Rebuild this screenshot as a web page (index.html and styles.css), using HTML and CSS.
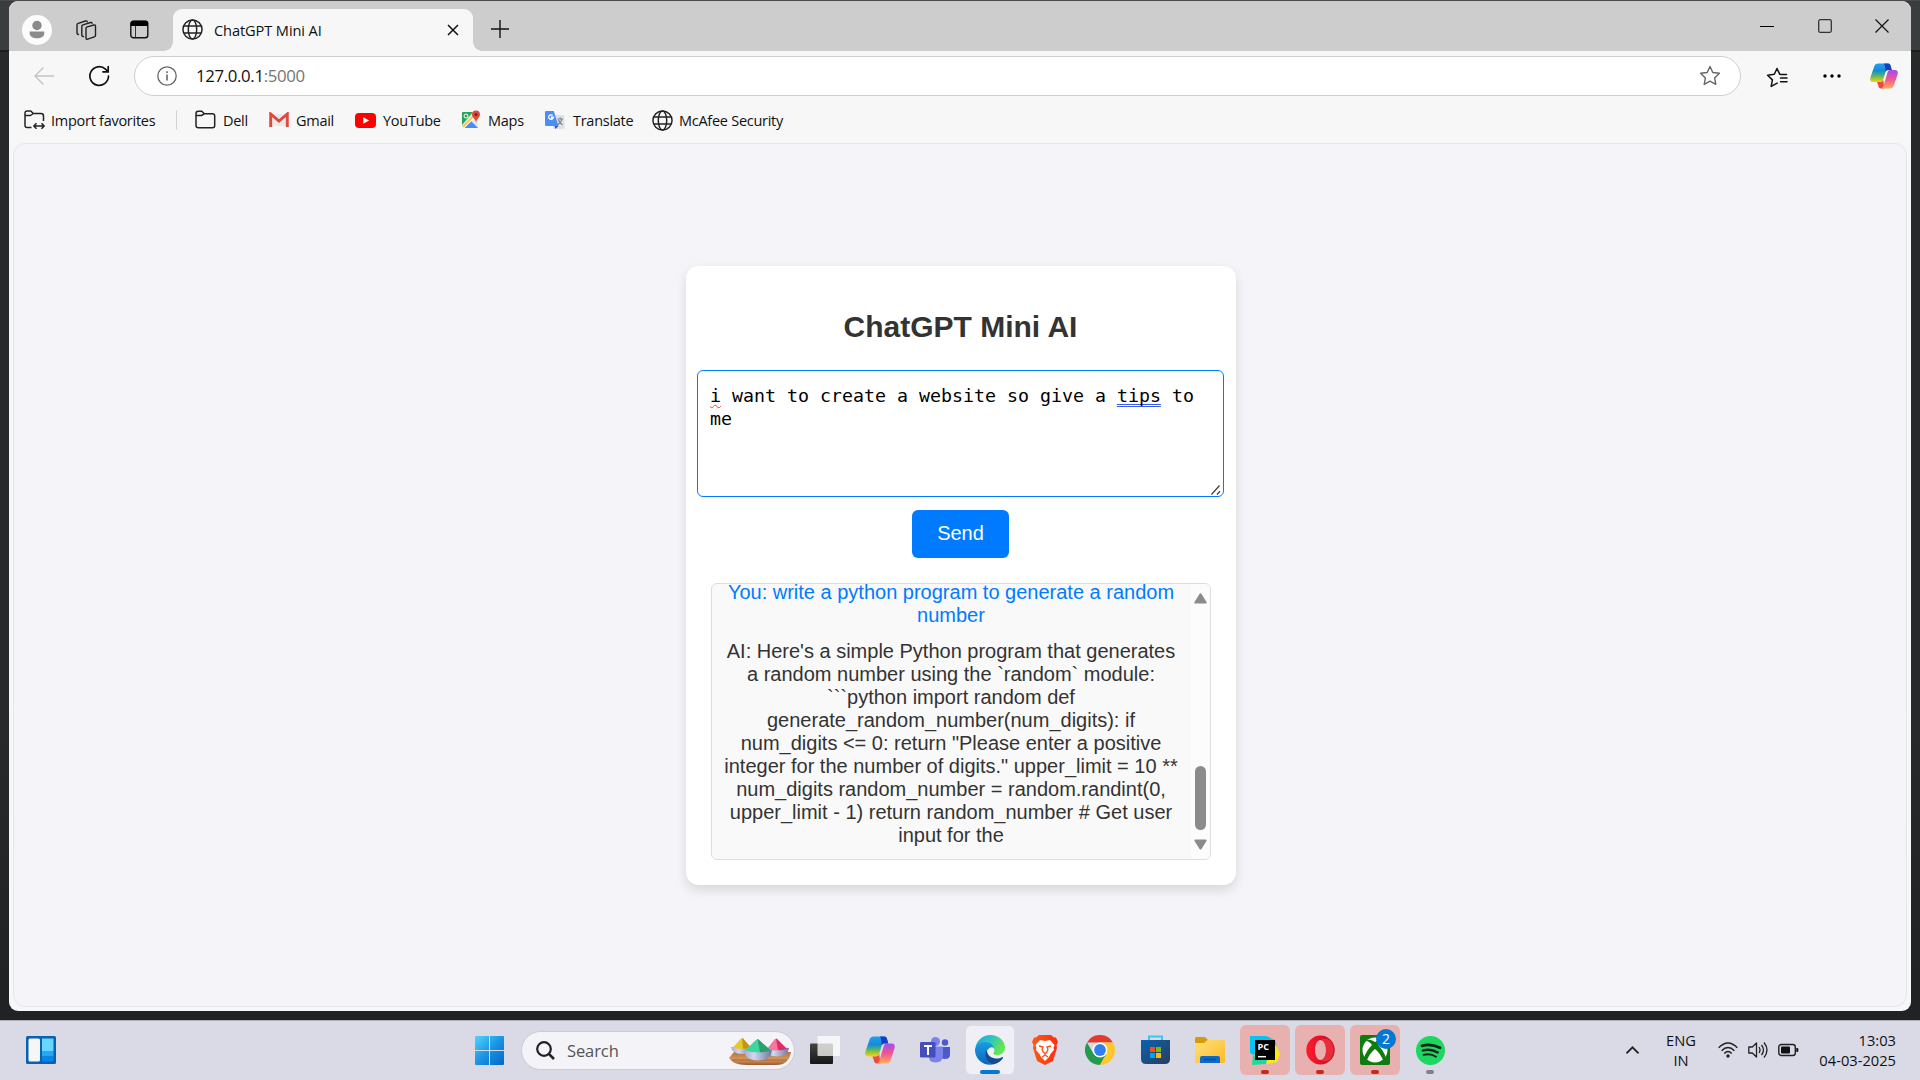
FILE: index.html
```html
<!DOCTYPE html>
<html lang="en">
<head>
<meta charset="utf-8">
<title>ChatGPT Mini AI</title>
<link rel="stylesheet" href="styles.css">
</head>
<body>
<svg width="0" height="0" class="defs">
  <defs>
    <linearGradient id="cpA" x1="0" y1="0" x2="0" y2="1"><stop offset="0" stop-color="#1fa0f0"/><stop offset=".4" stop-color="#168bd8"/><stop offset=".65" stop-color="#52b56a"/><stop offset="1" stop-color="#ffd400"/></linearGradient>
    <linearGradient id="cpB" x1="0" y1="0" x2="0" y2="1"><stop offset="0" stop-color="#a04df2"/><stop offset=".5" stop-color="#f0568f"/><stop offset="1" stop-color="#ffad5c"/></linearGradient>
    <linearGradient id="win" x1="0" y1="0" x2="1" y2="1"><stop offset="0" stop-color="#55d3ff"/><stop offset=".5" stop-color="#1a94e3"/><stop offset="1" stop-color="#0069c4"/></linearGradient>
    <linearGradient id="edgeTop" x1="0" y1="0" x2="1" y2=".4"><stop offset="0" stop-color="#23a5dc"/><stop offset=".5" stop-color="#2dc3c7"/><stop offset="1" stop-color="#66e64f"/></linearGradient>
    <linearGradient id="edgeLeft" x1="0" y1="0" x2="0" y2="1"><stop offset="0" stop-color="#1b9de0"/><stop offset="1" stop-color="#0a65c0"/></linearGradient>
    <linearGradient id="brave" x1="0" x2="1"><stop offset="0" stop-color="#ff5a12"/><stop offset="1" stop-color="#fb2d12"/></linearGradient>
    <linearGradient id="store" x1="0" y1="0" x2="1" y2="1"><stop offset="0" stop-color="#0b63b2"/><stop offset="1" stop-color="#2a3c5c"/></linearGradient>
    <linearGradient id="folder" x1="0" y1="0" x2="1" y2="1"><stop offset="0" stop-color="#ffe07a"/><stop offset="1" stop-color="#fdbb25"/></linearGradient>
    <linearGradient id="opera" x1="0" x2="1"><stop offset="0" stop-color="#ff1b2d"/><stop offset="1" stop-color="#c20a20"/></linearGradient>
    <linearGradient id="bowl" x1="0" x2="1"><stop offset="0" stop-color="#a3aad4"/><stop offset=".35" stop-color="#d3d6ee"/><stop offset="1" stop-color="#6f74a6"/></linearGradient>
    <linearGradient id="wood" x1="0" y1="0" x2="0" y2="1"><stop offset="0" stop-color="#b27443"/><stop offset=".6" stop-color="#d99a5d"/><stop offset="1" stop-color="#9a5a30"/></linearGradient>
    <linearGradient id="tvDark" x1="0" y1="0" x2="0" y2="1"><stop offset="0" stop-color="#44443f"/><stop offset="1" stop-color="#161616"/></linearGradient>
    <symbol id="copilot" viewBox="0 0 28 28">
      <path d="M8.3 1.5H18c1.700 0 2.200 1 2.700 2.800L21.700 8h-3.300c-1.800 0-2.500.8-3 2.500l-2.200 7.200c-.6 1.800-1.400 2.300-3.200 2.300H3.200C.4 20-.2 18 .4 15.600L4 5c.8-2.400 1.900-3.500 4.300-3.500z" fill="url(#cpA)"/>
      <path d="M14 1.500h4c1.700 0 2.200 1 2.700 2.800L21.700 8h-3.300c-1.400 0-2.100.5-2.700 1.600-.2-3-.7-6-1.700-8.100z" fill="#193cc4"/>
      <path d="M7 20h3c1.800 0 2.600-.5 3.200-2.300l1.300 8.800H11c-1.700 0-2.200-1-2.700-2.800z" fill="#ee4b3f"/>
      <path d="M19.700 26.500H10c2 0 3-.9 3.600-3l3.800-12.700c.6-1.800 1-2.800 2.800-2.800h4.600c2.800 0 3.400 2 2.800 4.400L24 23c-.8 2.400-1.900 3.500-4.300 3.500z" fill="url(#cpB)"/>
    </symbol>
    <symbol id="globe" viewBox="0 0 20 20">
      <g fill="none" stroke="#222" stroke-width="1.4"><circle cx="10" cy="10" r="9.100"/><ellipse cx="10" cy="10" rx="4" ry="9.100"/><path d="M1.700 6.600h16.600M1.700 13.400h16.600"/></g>
    </symbol>
  </defs>
</svg>

<div class="window">
  <header class="tabstrip">
    <span class="avatar"><svg width="30" height="30"><circle cx="15" cy="15" r="15" fill="#fcfcfc"/><circle cx="15" cy="10.500" r="4.700" fill="#8b8b8b"/><path d="M7.700 16.500h14.600v1.700c0 3.300-3.200 5-7.300 5s-7.300-1.700-7.300-5z" fill="#8b8b8b"/></svg></span>
    <svg class="workspaces" width="22" height="22" viewBox="0 0 22 22" fill="none" stroke="#222" stroke-width="1.400" stroke-linejoin="round" stroke-linecap="round"><path d="M11.500 8.200 18.800 6q1.700-.4 1.700 1.200v9q0 1.200-1.200 1.600l-6.600 2.400q-1.700.5-1.700-1.200V9.600q0-1 .5-1.400z"/><path d="M8.500 17.500q-1.700.3-1.700-1.400V7.500q0-1.300 1.200-1.700l7.500-2.300q1.300-.3 1.700.7"/><path d="M3.500 15.500Q2 15.500 2 14V6q0-1.200 1.200-1.600L10.500 2q1.300-.4 1.800.8"/></svg>
    <svg class="vtabs" width="19" height="19" viewBox="0 0 19 19"><rect x=".8" y="1.200" width="17" height="16.500" rx="2.500" fill="none" stroke="#111" stroke-width="1.400"/><path d="M.8 6V3.500Q.8.800 3.300.8h12.200q2.500 0 2.500 2.700V6z"/><path d="M5.500 6v11.500" stroke="#333"/></svg>
    <div class="tab">
      <svg width="21" height="21"><use href="#globe"/></svg>
      <span class="tab-title">ChatGPT Mini AI</span>
      <svg width="12" height="12" stroke="#111" stroke-width="1.500"><path d="M1 1l10 10M11 1L1 11"/></svg>
    </div>
    <svg class="newtab" width="18" height="18" stroke="#111" stroke-width="1.400"><path d="M9 0v18M0 9h18"/></svg>
    <div class="controls">
      <svg width="14" height="14" stroke="#000" stroke-width="1.200"><path d="M0 7.500h14"/></svg>
      <svg width="14" height="14" fill="none" stroke="#333" stroke-width="1.300"><rect x=".7" y=".7" width="12.600" height="12.600" rx="1.500"/></svg>
      <svg width="14" height="14" stroke="#111" stroke-width="1.200"><path d="M.5.500l13 13M13.500.500l-13 13"/></svg>
    </div>
  </header>

  <div class="toolbar">
    <svg class="back" width="20" height="18" fill="none" stroke="#c3c3c3" stroke-width="1.400"><path d="M20 9H1M9.500.5L1 9l8.500 8.500"/></svg>
    <svg class="reload" width="22" height="22" fill="none" stroke="#111" stroke-width="1.700" stroke-linecap="round"><path d="M20.500 11a9.300 9.300 0 1 1-3-6.800l2.300 2.300M20.200 1.500v5.300h-5.300"/></svg>
    <div class="address">
      <svg width="20" height="20" fill="none" stroke="#666" stroke-width="1.300"><circle cx="10" cy="10" r="9.200"/><path d="M10 8.500v6M10 5.200v1.700" stroke-width="1.600"/></svg>
      <span class="url">127.0.0.1<i>:5000</i></span>
      <svg width="22" height="21" viewBox="0 0 22 21" fill="none" stroke="#666" stroke-width="1.400" stroke-linejoin="round"><path d="M11 1.500l2.800 6 6.600.8-4.800 4.600 1.200 6.500-5.800-3.200-5.800 3.200 1.200-6.500L1.600 8.300l6.600-.8z"/></svg>
    </div>
    <svg class="favs" width="22" height="21" viewBox="0 0 22 21" fill="none" stroke="#111" stroke-width="1.500" stroke-linejoin="round" stroke-linecap="round"><path d="M15 7.500l-1.200-.2L11 1.500l-2.700 5.700-6.700 1 4.800 4.700-1.200 6.500 6-3.300M14.500 11H21M14.500 14.700H21M15.500 7.500h5"/></svg>
    <svg class="dots" width="18" height="4"><circle cx="2" cy="2" r="1.700"/><circle cx="9" cy="2" r="1.700"/><circle cx="16" cy="2" r="1.700"/></svg>
    <svg class="cp" width="28" height="28"><use href="#copilot"/></svg>
  </div>

  <nav class="bookmarks">
    <a class="bm bm-import"><svg width="21" height="20" viewBox="0 0 21 20" fill="none" stroke="#222" stroke-width="1.500" stroke-linejoin="round"><path d="M7.500 17.500H3.200Q1 17.500 1 15.300V3.200Q1 1 3.200 1h3.600l2.500 2.500h7.500Q19.500 3.500 19.500 6v5M1 5.500h5.500l2.800-2M10 16h10M12.500 13.300L9.800 16l2.700 2.700M17.500 13.300l2.700 2.700-2.700 2.700"/></svg><span>Import favorites</span></a>
    <a class="bm bm-dell"><svg width="21" height="20" viewBox="0 0 21 20" fill="none" stroke="#222" stroke-width="1.500" stroke-linejoin="round"><path d="M1 5.500V3.500Q1 1.300 3.200 1.300h3.600l2.500 2.500h8Q19.700 3.800 19.700 6v9.500q0 2.300-2.200 2.300h-14Q1 17.800 1 15.500V5.500h5.500l2.800-1.700"/></svg><span>Dell</span></a>
    <a class="bm bm-gmail"><svg width="20" height="16" viewBox="0 0 20 16"><path d="M3 2h14v12H3z" fill="#e9e9e9"/><path d="M1.700 15V2l8.300 7 8.300-7v13" fill="none" stroke="#dd4b3e" stroke-width="2.900"/></svg><span>Gmail</span></a>
    <a class="bm bm-youtube"><svg width="21" height="15"><rect width="21" height="15" rx="4" fill="#f00"/><path d="M8.300 4.200v6.600l5.800-3.300z" fill="#fff"/></svg><span>YouTube</span></a>
    <a class="bm bm-maps"><svg width="20" height="20" viewBox="0 0 20 20"><rect x="1" y="2" width="16" height="16" rx="1" fill="#e3e7e9"/><path d="M1 3q0-1 1-1h10L1 15z" fill="#27a35b"/><path d="M3 18l7-7 7 7z" fill="#4b8df8"/><path d="M0 17L14 3l3 2L3 18.500z" fill="#fff" opacity=".85"/><path d="M1 16L13 4v3L2.500 17.700z" fill="#f1cf4a"/><path d="M5 18l5-5.500 6 5.500z" fill="#4b8df8"/><circle cx="5" cy="6" r="2" fill="none" stroke="#fff"/><path d="M15 13c0-4-4-5-4-8.500a4 4 0 0 1 8 0C19 8 15 9 15 13z" fill="#e04a3d"/><circle cx="15" cy="4.500" r="1.500" fill="#7c2019"/></svg><span>Maps</span></a>
    <a class="bm bm-translate"><svg width="20" height="20" viewBox="0 0 20 20"><rect x="8" y="5" width="11.500" height="14" rx="1" fill="#dfe1e3"/><path d="M1.300 1h7.500l4.700 15H1.300Q0 16 0 14.700V2.300Q0 1 1.300 1z" fill="#4c8df6"/><path d="M9.500 16h4l-3 3z" fill="#2b55c5"/><path d="M9.200 7H6.400v1.200H8A2.300 2.300 0 1 1 7.600 5.500" fill="none" stroke="#fff" stroke-width="1.200"/><path d="M12.500 9h5.500M15.200 7.500V9M17 9q-.7 3.500-4.200 5.800M13.500 10q1 2.800 4 4.800" stroke="#74848c" fill="none" stroke-width="1.200"/></svg><span>Translate</span></a>
    <a class="bm bm-mcafee"><svg width="21" height="21"><use href="#globe"/></svg><span>McAfee Security</span></a>
  </nav>

  <main class="page">
    <section class="card">
      <h2>ChatGPT Mini AI</h2>
      <div class="prompt"><span class="misspelled">i</span> want to create a website so give a <span class="grammar">tips</span> to me<svg class="grip" width="10" height="10" stroke="#444" stroke-width="1.300"><path d="M.5 9.500l8-9M6 9.500l3-3.200"/></svg></div>
      <button class="send">Send</button>
      <div class="output">
        <div class="messages">
          <p class="user">You: write a python program to generate a random number</p>
          <p>AI: Here's a simple Python program that generates<br>a random number using the `random` module:<br>```python import random def<br>generate_random_number(num_digits): if<br>num_digits &lt;= 0: return "Please enter a positive<br>integer for the number of digits." upper_limit = 10 **<br>num_digits random_number = random.randint(0,<br>upper_limit - 1) return random_number # Get user<br>input for the</p>
        </div>
        <div class="scrollbar">
          <svg width="13" height="11"><path d="M5.500 1q1-1.400 2 0l5 8q.5 1.500-1 1.500h-10Q0 10.500.5 9z" fill="#8b8b8b"/></svg>
          <span class="thumb"></span>
          <svg width="13" height="11"><path d="M5.500 10q1 1.400 2 0l5-8Q13 .500 11.500.500h-10Q0 .500.500 2z" fill="#8b8b8b"/></svg>
        </div>
      </div>
    </section>
  </main>
</div>

<footer class="taskbar">
  <svg class="widgets" width="30" height="28"><rect width="30" height="28" rx="1.500" fill="#0861b3"/><rect x="2.500" y="2.500" width="11.500" height="23" rx="1.500" fill="#f6f6f6"/><path d="M16 2.500h11.500V15H16z" fill="#68d7ff"/><path d="M16 15h11.500v5.500H16z" fill="#24a7f7"/><path d="M16 20.500h11.500v5H16z" fill="#0a84e8"/></svg>
  <svg class="start" width="29" height="29"><path fill="url(#win)" d="M1 0h13v14H0V1Q0 0 1 0zM15 0h13q1 0 1 1v13H15zM0 15h14v14H1q-1 0-1-1zM15 15h14v13q0 1-1 1H15z"/></svg>
  <div class="search">
    <svg width="19" height="19" fill="none" stroke="#222" stroke-width="2.200"><circle cx="8" cy="8" r="6.800"/><path d="M12.800 12.800l5.200 5.200" stroke-width="2.600"/></svg>
    <span>Search</span>
    <svg class="holi" width="64" height="30" viewBox="0 0 64 30"><path d="M6 15h57q-2 13-15 13H18Q5 28 1 21z" fill="url(#wood)"/><path d="M4 23h55" stroke="#9c6238"/><path d="M3 10h22q-1 7-11 7T3 10z" fill="url(#bowl)"/><path d="M5 10.500L12.500 2q1.500-1.500 3 0L23 10.500q-9 3-18 0z" fill="#e8c92a"/><path d="M14 1q1 0 1.500 1L23 10.500q-4 1.500-8 1.300z" fill="#bf981b"/><path d="M37 11h24q-1 8.500-12 8.500T37 11z" fill="url(#bowl)"/><path d="M39 12l7.500-9.500q1.500-1.500 3 0L59 12q-10 3-20 0z" fill="#f7779f"/><path d="M48 1.500q1 0 1.500 1L59 12q-4 1.500-9 1z" fill="#dd2c66"/><path d="M16 13h28q-1 10.500-14 10.500T16 13z" fill="url(#bowl)"/><path d="M17 13.500L28 3q1.500-1.500 3 0l12 10.500q-13 4-26 0z" fill="#3dd6a3"/><path d="M29.500 2q1 0 1.500 1l12 10.500q-5 2-11 1.800z" fill="#2d9f68"/></svg>
  </div>
  <div class="apps">
    <span class="app"><svg width="30" height="28"><rect y="7.500" width="23" height="20.500" rx="1" fill="url(#tvDark)"/><rect x="7.500" width="22.500" height="20" rx="1" fill="#fff" opacity=".75"/></svg></span>
    <span class="app"><svg width="30" height="30"><use href="#copilot"/></svg></span>
    <span class="app"><svg width="30" height="28" viewBox="0 0 30 28"><circle cx="15.500" cy="5.500" r="4.500" fill="#7b83eb"/><circle cx="25" cy="6.500" r="3.200" fill="#5059c9"/><path d="M20 11h10v7.500q0 4.500-5 4.500t-5-4.500z" fill="#5059c9"/><path d="M9 10.500h14V19q0 7.500-7.500 7.500T9 19z" fill="#7b83eb"/><rect y="6" width="15.500" height="15.500" rx="1.200" fill="#474dbb"/><path d="M4 10h8M8 10v9" stroke="#fff" stroke-width="2"/></svg></span>
    <span class="app active"><svg width="30" height="30" viewBox="0 0 30 30"><path d="M.5 12C2 5 8 0 15 0c9 0 15 6 15 12.500 0 5-4 7.500-8 7.500-2.500 0-4-1-3.500-2 1-1.500 1-2 .8-3.500C19 11 15 8 10 8 6 8 2.500 9.500.5 12z" fill="url(#edgeTop)"/><path d="M0 15c0-5 4.500-8 9.500-8 6 0 9.500 3.500 9.800 7-1-2-3.200-2-4.800-1-3 2-4 5-3.500 8 .8 5 4 8 6.500 8.700C8 31 0 24 0 15z" fill="url(#edgeLeft)"/><path d="M11.500 15C9 20 11 28 18 29.500c5-1 8-3.500 10-6.500.5-.8-.2-1.300-1-.8-5 2.800-13 .8-14.500-4.200-.4-1.300-.4-2-1-3z" fill="#124d94"/></svg></span>
    <span class="app"><svg width="26" height="30" viewBox="0 0 26 30"><path d="M7 0h12l3 2.500h2L26 7l-1.500 3 .5 3-4 13-8 4-8-4L1 13l.5-3L0 7l2-4.500h2z" fill="url(#brave)"/><path d="M8 5l5 1 5-1 4.500 5-1 3 .5 2-3.500 4-1.500 3-4 4-4-4-1.500-3L4 15l.5-2-1-3z" fill="#fff"/><path d="M7 11l4 1-1 2.500 1.500 3L13 18.500l1.500-1L16 14.500 15 12l4-1M13 18v3M10 22l3-2 3 2" fill="none" stroke="#ff4a15" stroke-width="1.300"/></svg></span>
    <span class="app"><svg width="30" height="30" viewBox="0 0 30 30"><path d="M2 7.500A15 15 0 0 1 28 7.500H15z" fill="#e23b2e"/><path d="M2 7.500A15 15 0 0 0 15 30l6.500-11.200L15 15 8.500 18.700z" fill="#249a4c"/><path d="M28 7.500H15l6.500 11.300L15 30A15 15 0 0 0 28 7.500z" fill="#fdc72d"/><circle cx="15" cy="15" r="7.400" fill="#fff"/><circle cx="15" cy="15" r="5.900" fill="#2f80ed"/></svg></span>
    <span class="app"><svg width="29" height="30" viewBox="0 0 29 30"><path d="M8 6V1.500h13V6" fill="none" stroke="#38c7f5" stroke-width="2"/><path d="M0 5h29v19q0 5-5 5H5q-5 0-5-5z" fill="url(#store)"/><path d="M9 12h5v5H9z" fill="#f25022"/><path d="M15 12h5v5h-5z" fill="#7fba00"/><path d="M9 18h5v5H9z" fill="#00a4ef"/><path d="M15 18h5v5h-5z" fill="#ffb900"/></svg></span>
    <span class="app"><svg width="30" height="26" viewBox="0 0 30 26"><path d="M0 1.500Q0 0 1.500 0H10l3 3-3 5H0z" fill="#d99a0b"/><path d="M0 6h9l3.500-3H28.500Q30 3 30 4.500v20q0 1.500-1.500 1.500h-27Q0 26 0 24.500z" fill="url(#folder)"/><path d="M5 26v-5q0-2 2-2h16q2 0 2 2v5z" fill="#0b6bc7"/><path d="M9 22.500h12" stroke="#0a4a94" stroke-width="1.500"/></svg></span>
    <span class="app alert"><svg width="31" height="31" viewBox="0 0 31 31"><path d="M0 1h16l5 2v11L5 21 0 18z" fill="#07c3f2"/><path d="M20 3l5 2 2 7-6 8-4-6z" fill="#21d789"/><path d="M3 20l7-2 16-8 4 9-3 8-10 2-6-2-6 3z" fill="#f7ea1b"/><path d="M2 30l1-10 14 5-1 4z" fill="#21d7a0"/><rect x="5" y="5" width="20" height="20"/><text x="7.500" y="14.500" class="pc">PC</text><path d="M8 21.700h8" stroke="#fff" stroke-width="1.500"/></svg></span>
    <span class="app alert"><svg width="29" height="30" viewBox="0 0 29 30"><path fill-rule="evenodd" d="M14.500.5a14.200 14.500 0 1 0 0 29 14.200 14.500 0 0 0 0-29zm0 4.500c3.300 0 5.500 4.500 5.500 10s-2.200 10-5.500 10S9 20.500 9 15s2.200-10 5.500-10z" fill="url(#opera)"/><path d="M14.500 5c3-1.500 6-1.800 9 0a14 14 0 0 1 0 20c-3 1.800-6 1.500-9 0 3.300 0 5.500-4.500 5.500-10S17.800 5 14.500 5z" fill="#f63d46" opacity=".65"/></svg></span>
    <span class="app alert"><svg width="30" height="30"><rect width="30" height="30" rx="2" fill="#107c10"/><circle cx="15" cy="15" r="12.500" fill="#fff"/><path d="M6 6Q9 3 15 7q6-4 9-1-3 0-6 4 6 6 8 13l-3 2Q20 18 15 14q-5 4-8 11l-3-2q2-7 8-13Q9 6 6 6z" fill="#107c10"/></svg><b class="badge">2</b></span>
    <span class="app running"><svg width="29" height="29" fill="none" stroke="#10251a" stroke-linecap="round"><circle cx="14.500" cy="14.500" r="14.500" fill="#1ed760" stroke="none"/><path d="M6 9.800q9-2.500 18 2" stroke-width="2.800"/><path d="M6.800 14.500q8-2.200 15 2" stroke-width="2.300"/><path d="M7.500 18.800q7-1.800 12.500 1.900" stroke-width="1.900"/></svg></span>
  </div>
  <div class="tray">
    <svg class="chev" width="13" height="8" fill="none" stroke="#222" stroke-width="1.700"><path d="M.5 7.300l6-6 6 6"/></svg>
    <div class="lang">ENG<br>IN</div>
    <svg class="wifi" width="20" height="16" viewBox="0 0 20 16" fill="none" stroke="#222" stroke-width="1.400"><path d="M.7 5.800q9.300-9.500 18.600 0M3.600 8.700q6.400-6.400 12.800 0M6.300 11.400q3.700-3.600 7.400 0"/><circle cx="10" cy="14" r="1.700" fill="#222" stroke="none"/></svg>
    <svg class="vol" width="21" height="18" viewBox="0 0 21 18" fill="none" stroke="#222" stroke-width="1.300" stroke-linejoin="round"><path d="M.8 6h3.500L8.500 2v14L4.300 12H.8z"/><path d="M11 6q2 3 0 6M13.500 4q4 5 0 10M16 1.500q6 7.500 0 15"/></svg>
    <svg class="bat" width="21" height="14" viewBox="0 0 21 14"><rect x=".8" y="1.500" width="16.500" height="11" rx="2.500" fill="none" stroke="#222" stroke-width="1.400"/><rect x="3" y="3.500" width="9" height="7" rx="1" fill="#111"/><path d="M18.300 5h1q1 0 1 1v2q0 1-1 1h-1z" fill="#111"/></svg>
    <div class="clock">13:03<br>04-03-2025</div>
  </div>
</footer>
</body>
</html>
```
FILE: styles.css
```css
* { box-sizing: border-box; }
body {
  margin: 0;
  width: 1920px;
  height: 1080px;
  overflow: hidden;
  display: flex;
  flex-direction: column;
  background: linear-gradient(#4c4b4c 0 1px, #393d3e 1px 50px, #1d1d1e 50px 52px, #28292b 52px 700px, #202224 1000px);
  font-family: "Open Sans", "Noto Sans", sans-serif;
  color: #111;
}
svg { display: block; flex: none; }
.defs { height: 0; }

.window {
  margin: 1px 9px 0;
  height: 1010px;
  flex: none;
  display: flex;
  flex-direction: column;
  background: #f7f7f7;
  border-radius: 9px;
  overflow: hidden;
}

.tabstrip { height: 50px; display: flex; align-items: center; background: #cdcdcd; padding: 0 15px 0 13px; }
.avatar { margin-top: 7px; }
.workspaces { margin-left: 23px; margin-top: 7px; }
.vtabs { margin-left: 33px; margin-top: 7px; }
.tab {
  position: relative;
  align-self: flex-end;
  width: 300px;
  height: 42px;
  margin-left: 24px;
  padding: 0 14px 1px 9px;
  display: flex;
  align-items: center;
  background: #f7f7f7;
  border-radius: 9px 9px 0 0;
}
.tab::before, .tab::after {
  content: "";
  position: absolute;
  bottom: 0;
  width: 9px;
  height: 9px;
}
.tab::before { left: -9px; background: radial-gradient(circle at 0 0, transparent 8.5px, #f7f7f7 9px); }
.tab::after { right: -9px; background: radial-gradient(circle at 100% 0, transparent 8.5px, #f7f7f7 9px); }
.tab-title { flex: 1; margin-left: 11px; font-size: 14.6px; letter-spacing: -.1px; }
.newtab { margin-left: 18px; margin-top: 6px; }
.controls { margin-left: auto; margin-top: -1px; display: flex; gap: 43.500px; padding-right: 7px; }

.toolbar { height: 49px; display: flex; align-items: center; padding-left: 25px; }
.reload { margin-left: 34px; }
.address {
  width: 1607px;
  height: 40px;
  margin-left: 24px;
  padding: 0 19px 0 22px;
  display: flex;
  align-items: center;
  background: #fff;
  border: 1px solid #cecece;
  border-radius: 20px;
}
.url { flex: 1; margin-left: 19px; font-size: 16.800px; letter-spacing: -.35px; }
.url i { font-style: normal; color: #757575; }
.favs { margin-left: 25px; margin-top: 3px; }
.dots { margin-left: 35px; margin-top: 1px; }
.cp { margin-left: 29px; }

.bookmarks { height: 42px; display: flex; align-items: center; padding: 0 0 2px 15px; font-size: 14.500px; }
.bm { display: flex; align-items: center; white-space: nowrap; letter-spacing: -.27px; }
.bm-import { width: 153px; gap: 6px; border-right: 1px solid #d4d4d4; height: 20px; }
.bm-dell { width: 91px; gap: 7px; padding-left: 18px; }
.bm-gmail { width: 87px; gap: 7px; padding-left: 1px; }
.bm-youtube { width: 106px; gap: 7px; }
.bm-maps { width: 84px; gap: 7px; }
.bm-translate { width: 106px; gap: 8px; }
.bm-mcafee { gap: 6px; padding-left: 1px; }

.page {
  flex: 1;
  margin: 1px 4px 4px;
  padding-left: 1px;
  display: flex;
  align-items: center;
  justify-content: center;
  background: #f4f4f9;
  border: 1px solid #e6e6e8;
  border-radius: 12px;
  font-family: "Liberation Sans", Arial, sans-serif;
}
.card {
  width: 550px;
  height: 619px;
  padding: 42px 11px 25px;
  display: flex;
  flex-direction: column;
  align-items: center;
  background: #fff;
  border-radius: 12.500px;
  box-shadow: 0 5px 12px rgba(0, 0, 0, .12);
  font-size: 20px;
  line-height: 23px;
  color: #333;
}
.card h2 { margin: 0 0 24px; font-size: 30px; line-height: 38px; }
.prompt {
  position: relative;
  width: 527px;
  height: 127px;
  padding: 13px 12px;
  border: 1px solid #007bff;
  border-radius: 6px;
  font: 18.270px/23px "DejaVu Sans Mono", monospace;
  color: #000;
}
.misspelled { text-decoration: underline wavy #f33 1px; text-underline-offset: 2px; text-decoration-skip-ink: none; }
.grammar { text-decoration: underline double #3a5ce5 1px; text-underline-offset: 2px; text-decoration-skip-ink: none; }
.grip { position: absolute; right: 2px; bottom: 1px; }
.send {
  width: 97px;
  height: 48px;
  margin-top: 13px;
  padding: 0;
  border: 0;
  border-radius: 6px;
  background: #007bff;
  color: #fff;
  font: 20px "Liberation Sans", Arial, sans-serif;
}
.output {
  width: 500px;
  height: 277px;
  margin-top: 25px;
  display: flex;
  overflow: hidden;
  background: #f9f9f9;
  border: 1px solid #ddd;
  border-radius: 6px;
}
.messages { flex: 1; margin-top: -3px; text-align: center; white-space: nowrap; }
.messages p { margin: 0 0 13px; }
.messages .user { color: #007bff; white-space: normal; padding: 0 12px; }
.scrollbar { width: 19px; padding: 9px 3px; display: flex; flex-direction: column; align-items: center; background: #fcfcfc; }
.thumb { width: 11px; height: 64px; margin: auto 0 9px; border-radius: 6px; background: #8b8b8b; }

.taskbar {
  height: 60px;
  flex: none;
  margin-top: 9px;
  display: flex;
  align-items: center;
  background: #dad9e6;
  border-top: 1px solid #aeadb3;
  padding-bottom: 1px;
}
.widgets { margin-left: 26px; }
.start { margin-left: 419px; }
.search {
  width: 274px;
  height: 39px;
  margin-left: 17px;
  padding: 0 2px 0 14px;
  display: flex;
  align-items: center;
  background: #f4f3f8;
  border: 1px solid #cbcad5;
  border-radius: 20px;
}
.search span { flex: 1; margin-left: 12px; font-size: 16.500px; letter-spacing: -.1px; color: #555; }
.holi { margin-top: 4px; }
.apps { display: flex; gap: 5px; margin-left: 5px; }
.app { position: relative; width: 50px; height: 50px; display: flex; align-items: center; justify-content: center; border-radius: 6px; }
.active { background: #efeff5; border: 1px solid #dddce6; }
.alert { background: #e8b0ae; }
.active::after, .alert::after, .running::after {
  content: "";
  position: absolute;
  bottom: 1px;
  width: 8px;
  height: 4px;
  border-radius: 2px;
  background: #c42b1c;
}
.active::after { width: 20px; background: #0078d4; bottom: 0; }
.running::after { background: #828188; }
.pc { font: bold 9px "Open Sans", sans-serif; fill: #fff; }
.badge {
  position: absolute;
  right: 4px;
  top: 4px;
  width: 20px;
  height: 20px;
  border-radius: 10px;
  background: #0078d4;
  color: #fff;
  font: 14px/20px "Open Sans", sans-serif;
  text-align: center;
}
.tray { margin-left: auto; margin-right: 24px; display: flex; align-items: center; font-size: 14.700px; line-height: 20px; letter-spacing: 0; }
.lang { width: 40px; margin-left: 22px; text-align: center; }
.wifi { margin-left: 17px; }
.vol { margin-left: 10px; }
.bat { margin-left: 9px; }
.clock { width: 97px; text-align: right; white-space: nowrap; }
```
